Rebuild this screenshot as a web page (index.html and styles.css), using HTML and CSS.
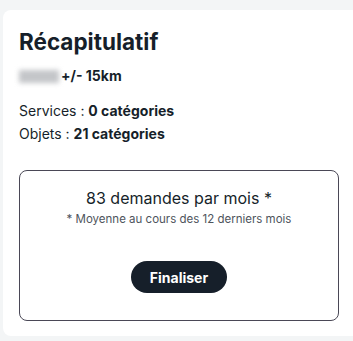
FILE: index.html
```html
<!DOCTYPE html>
<html lang="fr">
<head>
    <meta charset="UTF-8">
    <meta name="viewport" content="width=device-width, initial-scale=1.0">
    <title>Récapitulatif</title>
    <link rel="stylesheet" href="styles.css">
</head>
<body>
    <div class="recap-card">
        <h2 class="recap-title">Récapitulatif</h2>
        <div class="recap-zone">
            <span class="zone-blur"></span>
            <strong>+/- 15km</strong>
        </div>
        <div class="recap-lines">
            <p>Services : <strong>0 catégories</strong></p>
            <p>Objets : <strong>21 catégories</strong></p>
        </div>
        <div class="estimate-box">
            <div class="estimate-count">83 demandes par mois *</div>
            <div class="estimate-note">* Moyenne au cours des 12 derniers mois</div>
            <button type="button" class="finish-button">Finaliser</button>
        </div>
    </div>
</body>
</html>
```

FILE: styles.css
```css
body {
    margin: 0;
    padding: 10px 0 5px 3px;
    background-color: #f3f5f6;
    font-family: "Inter", "Lato", sans-serif;
    color: #161f2a;
}
.recap-card {
    width: 364px;
    height: 326px;
    box-sizing: border-box;
    padding: 18px 0 0 16px;
    background-color: #fff;
    border-radius: 8px;
}
.recap-title {
    margin: 0;
    font-size: 22.5px;
    font-weight: 700;
    line-height: 28px;
}
.recap-zone {
    display: flex;
    align-items: center;
    gap: 2px;
    margin-top: 11px;
    font-size: 14px;
    line-height: 18px;
}
.zone-blur {
    display: inline-block;
    width: 40px;
    height: 13px;
    background-color: #c4c6c9;
    filter: blur(2.5px);
}
.recap-lines {
    margin-top: 14px;
    font-size: 14px;
    line-height: 23px;
}
.recap-lines p {
    margin: 0;
}
.estimate-box {
    display: flex;
    flex-direction: column;
    align-items: center;
    width: 320px;
    height: 151px;
    box-sizing: border-box;
    margin-top: 25px;
    padding-top: 16px;
    border: 1px solid #4a4856;
    border-radius: 8px;
}
.estimate-count {
    font-size: 16px;
    line-height: 22px;
}
.estimate-note {
    margin-top: 2px;
    font-size: 11.5px;
    line-height: 16px;
    color: #4e545c;
}
.finish-button {
    margin-top: 34px;
    padding: 0 19px;
    height: 32px;
    background-color: #161f2a;
    color: #fff;
    border: none;
    border-radius: 16px;
    font-family: inherit;
    font-size: 14px;
    font-weight: 700;
    cursor: pointer;
}
```
